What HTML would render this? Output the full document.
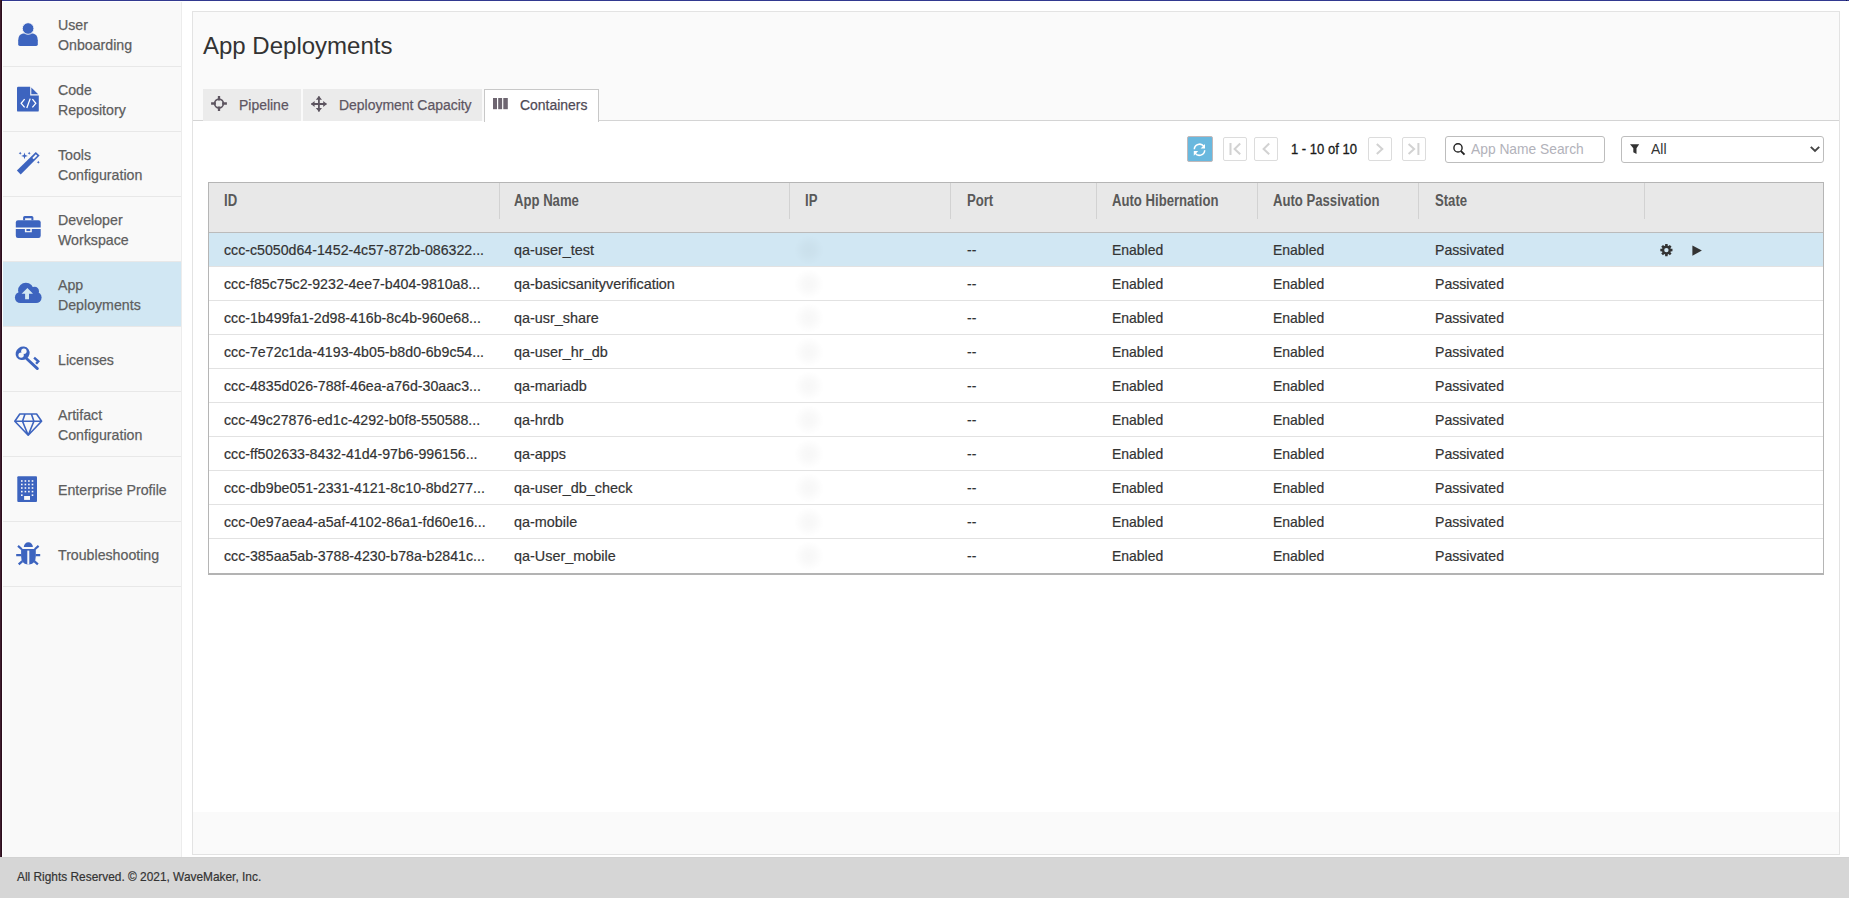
<!DOCTYPE html>
<html><head><meta charset="utf-8">
<style>
*{box-sizing:border-box;margin:0;padding:0}
html,body{width:1849px;height:898px;overflow:hidden;background:#fff;font-family:"Liberation Sans",sans-serif;color:#333}
.abs{position:absolute}
#topline{left:0;top:0;width:1849px;height:1px;background:#323990}
#ledge{left:0;top:0;width:2px;height:898px;background:linear-gradient(to right,#3f1d2e 0,#3f1d2e 1px,#2b0d1c 1px)}
#side{left:3px;top:2px;width:179px;height:855px;background:#f9f9f9;border-right:1px solid #ececec}
.item{position:absolute;left:0;width:178px;height:65px;border-bottom:1px solid #e8e8e8}
.item.active{background:#d1e7f3}
.item .lbl{position:absolute;left:55px;font-size:15px;line-height:20px;color:#5e5e5e;white-space:nowrap;transform:scaleX(0.945);transform-origin:0 0;-webkit-text-stroke:0.25px #5e5e5e}
.item svg{position:absolute}
#panel{left:192px;top:11px;width:1648px;height:844px;border:1px solid #e3e3e3;background:#fafafa}
#title{left:203px;top:32px;font-size:24px;line-height:28px;color:#333;white-space:nowrap}
#tabline{left:193px;top:120px;width:1646px;height:1px;background:#d4d4d4}
#content{left:193px;top:121px;width:1646px;height:691px;background:#fff}
.tab{position:absolute;top:89px;height:32px;background:#ebebeb;font-size:15.5px;color:#5e5662;white-space:nowrap}
.tab .t{position:absolute;top:8px;line-height:16px;transform:scaleX(0.9);transform-origin:0 0;-webkit-text-stroke:0.25px currentColor}
.tab svg{position:absolute}
.tab.act{background:#fff;border:1px solid #c8c8c8;border-bottom:none;color:#4f4a55}
.tab.act .t{top:7px}
#footer{left:0;top:857px;width:1849px;height:41px;background:#d6d6d6;border-top:1px solid #d2d2d2}
#footer span{position:absolute;left:17px;top:11px;font-size:13.3px;line-height:16px;color:#333;white-space:nowrap;transform:scaleX(0.894);transform-origin:0 0;-webkit-text-stroke:0.2px #333}
.pbtn{position:absolute;top:137px;width:24px;height:24px;border:1px solid #dcdcdc;border-radius:2px;background:#fff}
#refresh{left:1187px;top:136px;width:26px;height:26px;background:#69b8de;border:1px solid #c2b9ba;border-radius:2px}
#pinfo{left:1291px;top:141px;font-size:14px;line-height:16px;color:#1a1a1a;white-space:nowrap;transform:scaleX(0.93);transform-origin:0 0;-webkit-text-stroke:0.3px #1a1a1a}
#search{left:1445px;top:136px;width:160px;height:27px;border:1px solid #bdbdbd;border-radius:3px;background:#fff}
#search span{position:absolute;left:25px;top:4px;font-size:15px;line-height:16px;color:#b2b2ba;white-space:nowrap;transform:scaleX(0.92);transform-origin:0 0}
#filter{left:1621px;top:136px;width:203px;height:27px;border:1px solid #bdbdbd;border-radius:3px;background:#fff}
#filter span{position:absolute;left:29px;top:4px;font-size:15px;line-height:16px;color:#333;transform:scaleX(0.93);transform-origin:0 0}
#table{left:208px;top:182px;width:1616px;height:393px;border:1px solid #b5b5b5;border-bottom:2px solid #b3b3b3;background:#fff}
#thead{position:absolute;left:0;top:0;width:1614px;height:50px;background:#e8e8e8;border-bottom:1px solid #bbb}
.th{position:absolute;top:10px;font-size:16px;font-weight:bold;line-height:16px;color:#595959;white-space:nowrap;transform:scaleX(0.82);transform-origin:0 0}
.sep{position:absolute;top:0;width:1px;height:36px;background:#d2d2d2}
.row{position:absolute;left:0;width:1614px;height:34px;border-bottom:1px solid #e2e2e2}
.row.sel{background:#d1e7f3}
.row span{position:absolute;top:9px;font-size:15px;line-height:16px;color:#333;white-space:nowrap;transform:scaleX(0.93);transform-origin:0 0;-webkit-text-stroke:0.2px #333}
.blob{position:absolute;left:585px;top:2px;width:30px;height:30px;border-radius:50%;background:radial-gradient(circle closest-side,rgba(0,0,0,0.032) 0,rgba(0,0,0,0.022) 40%,rgba(0,0,0,0.006) 80%,rgba(0,0,0,0) 100%)}

</style></head><body>
<div id="topline" class="abs"></div>
<div id="ledge" class="abs"></div>
<div class="abs" style="left:1846px;top:0;width:1px;height:1px;background:#101448"></div>
<div id="side" class="abs">
<div class="item" style="top:0px"><div class="lbl" style="top:13px">User<br>Onboarding</div></div>
<div class="item" style="top:65px"><div class="lbl" style="top:13px">Code<br>Repository</div></div>
<div class="item" style="top:130px"><div class="lbl" style="top:13px">Tools<br>Configuration</div></div>
<div class="item" style="top:195px"><div class="lbl" style="top:13px">Developer<br>Workspace</div></div>
<div class="item active" style="top:260px"><div class="lbl" style="top:13px">App<br>Deployments</div></div>
<div class="item" style="top:325px"><div class="lbl" style="top:23px">Licenses</div></div>
<div class="item" style="top:390px"><div class="lbl" style="top:13px">Artifact<br>Configuration</div></div>
<div class="item" style="top:455px"><div class="lbl" style="top:23px">Enterprise Profile</div></div>
<div class="item" style="top:520px"><div class="lbl" style="top:23px">Troubleshooting</div></div>
</div>
<div id="panel" class="abs"></div>
<div id="content" class="abs"></div>
<div id="tabline" class="abs"></div>
<div id="title" class="abs">App Deployments</div>
<div class="tab" style="left:203px;width:98px"><div class="t" style="left:36px">Pipeline</div></div>
<div class="tab" style="left:303px;width:179px"><div class="t" style="left:36px">Deployment Capacity</div></div>
<div class="tab act" style="left:484px;width:115px;height:33px"><div class="t" style="left:35px">Containers</div></div>
<div class="abs" style="left:301px;top:120px;width:2px;height:1px;background:#fafafa"></div>
<div class="abs" style="left:482px;top:120px;width:2px;height:1px;background:#fafafa"></div>
<div id="refresh" class="abs"></div>
<div class="pbtn" style="left:1223px"></div>
<div class="pbtn" style="left:1254px"></div>
<div id="pinfo" class="abs">1 - 10 of 10</div>
<div class="pbtn" style="left:1368px"></div>
<div class="pbtn" style="left:1402px"></div>
<div id="search" class="abs"><span>App Name Search</span></div>
<div id="filter" class="abs"><span>All</span></div>
<div id="table" class="abs">
<div id="thead"><div class="th" style="left:15px">ID</div><div class="th" style="left:305px">App Name</div><div class="th" style="left:596px">IP</div><div class="th" style="left:758px">Port</div><div class="th" style="left:903px">Auto Hibernation</div><div class="th" style="left:1064px">Auto Passivation</div><div class="th" style="left:1226px">State</div><div class="sep" style="left:290px"></div><div class="sep" style="left:580px"></div><div class="sep" style="left:741px"></div><div class="sep" style="left:887px"></div><div class="sep" style="left:1048px"></div><div class="sep" style="left:1209px"></div><div class="sep" style="left:1435px"></div></div>
<div class="row sel" style="top:50px"><div class="blob"></div><span style="left:15px;transform:scaleX(0.945)">ccc-c5050d64-1452-4c57-872b-086322...</span><span style="left:305px;transform:scaleX(0.96)">qa-user_test</span><span style="left:758px;transform:scaleX(0.93)">--</span><span style="left:903px;transform:scaleX(0.93)">Enabled</span><span style="left:1064px;transform:scaleX(0.93)">Enabled</span><span style="left:1226px;transform:scaleX(0.94)">Passivated</span></div>
<div class="row" style="top:84px"><div class="blob"></div><span style="left:15px;transform:scaleX(0.945)">ccc-f85c75c2-9232-4ee7-b404-9810a8...</span><span style="left:305px;transform:scaleX(0.96)">qa-basicsanityverification</span><span style="left:758px;transform:scaleX(0.93)">--</span><span style="left:903px;transform:scaleX(0.93)">Enabled</span><span style="left:1064px;transform:scaleX(0.93)">Enabled</span><span style="left:1226px;transform:scaleX(0.94)">Passivated</span></div>
<div class="row" style="top:118px"><div class="blob"></div><span style="left:15px;transform:scaleX(0.945)">ccc-1b499fa1-2d98-416b-8c4b-960e68...</span><span style="left:305px;transform:scaleX(0.96)">qa-usr_share</span><span style="left:758px;transform:scaleX(0.93)">--</span><span style="left:903px;transform:scaleX(0.93)">Enabled</span><span style="left:1064px;transform:scaleX(0.93)">Enabled</span><span style="left:1226px;transform:scaleX(0.94)">Passivated</span></div>
<div class="row" style="top:152px"><div class="blob"></div><span style="left:15px;transform:scaleX(0.945)">ccc-7e72c1da-4193-4b05-b8d0-6b9c54...</span><span style="left:305px;transform:scaleX(0.96)">qa-user_hr_db</span><span style="left:758px;transform:scaleX(0.93)">--</span><span style="left:903px;transform:scaleX(0.93)">Enabled</span><span style="left:1064px;transform:scaleX(0.93)">Enabled</span><span style="left:1226px;transform:scaleX(0.94)">Passivated</span></div>
<div class="row" style="top:186px"><div class="blob"></div><span style="left:15px;transform:scaleX(0.945)">ccc-4835d026-788f-46ea-a76d-30aac3...</span><span style="left:305px;transform:scaleX(0.96)">qa-mariadb</span><span style="left:758px;transform:scaleX(0.93)">--</span><span style="left:903px;transform:scaleX(0.93)">Enabled</span><span style="left:1064px;transform:scaleX(0.93)">Enabled</span><span style="left:1226px;transform:scaleX(0.94)">Passivated</span></div>
<div class="row" style="top:220px"><div class="blob"></div><span style="left:15px;transform:scaleX(0.945)">ccc-49c27876-ed1c-4292-b0f8-550588...</span><span style="left:305px;transform:scaleX(0.96)">qa-hrdb</span><span style="left:758px;transform:scaleX(0.93)">--</span><span style="left:903px;transform:scaleX(0.93)">Enabled</span><span style="left:1064px;transform:scaleX(0.93)">Enabled</span><span style="left:1226px;transform:scaleX(0.94)">Passivated</span></div>
<div class="row" style="top:254px"><div class="blob"></div><span style="left:15px;transform:scaleX(0.945)">ccc-ff502633-8432-41d4-97b6-996156...</span><span style="left:305px;transform:scaleX(0.96)">qa-apps</span><span style="left:758px;transform:scaleX(0.93)">--</span><span style="left:903px;transform:scaleX(0.93)">Enabled</span><span style="left:1064px;transform:scaleX(0.93)">Enabled</span><span style="left:1226px;transform:scaleX(0.94)">Passivated</span></div>
<div class="row" style="top:288px"><div class="blob"></div><span style="left:15px;transform:scaleX(0.945)">ccc-db9be051-2331-4121-8c10-8bd277...</span><span style="left:305px;transform:scaleX(0.96)">qa-user_db_check</span><span style="left:758px;transform:scaleX(0.93)">--</span><span style="left:903px;transform:scaleX(0.93)">Enabled</span><span style="left:1064px;transform:scaleX(0.93)">Enabled</span><span style="left:1226px;transform:scaleX(0.94)">Passivated</span></div>
<div class="row" style="top:322px"><div class="blob"></div><span style="left:15px;transform:scaleX(0.945)">ccc-0e97aea4-a5af-4102-86a1-fd60e16...</span><span style="left:305px;transform:scaleX(0.96)">qa-mobile</span><span style="left:758px;transform:scaleX(0.93)">--</span><span style="left:903px;transform:scaleX(0.93)">Enabled</span><span style="left:1064px;transform:scaleX(0.93)">Enabled</span><span style="left:1226px;transform:scaleX(0.94)">Passivated</span></div>
<div class="row" style="top:356px;border-bottom:none"><div class="blob"></div><span style="left:15px;transform:scaleX(0.945)">ccc-385aa5ab-3788-4230-b78a-b2841c...</span><span style="left:305px;transform:scaleX(0.96)">qa-User_mobile</span><span style="left:758px;transform:scaleX(0.93)">--</span><span style="left:903px;transform:scaleX(0.93)">Enabled</span><span style="left:1064px;transform:scaleX(0.93)">Enabled</span><span style="left:1226px;transform:scaleX(0.94)">Passivated</span></div>
</div>
<div id="footer" class="abs"><span>All Rights Reserved. © 2021, WaveMaker, Inc.</span></div>
<svg class="abs" style="left:0;top:0;pointer-events:none" width="1849" height="898" viewBox="0 0 1849 898">
<g fill="#3d64bf">
<!-- user -->
<path d="M18.2,44.3V40.2Q18.2,33.2 25,33.2H31Q37.8,33.2 37.8,40.2V44.3Q37.8,45.9 36.2,45.9H19.8Q18.2,45.9 18.2,44.3Z"/>
<circle cx="28.1" cy="28.5" r="5.8" stroke="#f9f9f9" stroke-width="0.9"/>
<!-- code file -->
<path d="M17,88Q17,86.7 18.3,86.7H30.2V95.4H38.8V110.4Q38.8,111.6 37.6,111.6H18.2Q17,111.6 17,110.4Z"/>
<path d="M31.3,87.6L38.2,94.2H31.3Z"/>
<path d="M24.6,99.2L21.2,103.3L24.6,107.4M26.8,108L30.2,98.6M32.4,99.2L35.8,103.3L32.4,107.4" fill="none" stroke="#fff" stroke-width="1.3"/>
<!-- wand -->
<path d="M35.8,151.9L39.6,155.6L20.7,174.4L16.9,170.6Z"/>
<path d="M35.9,154.3L37.3,155.7L33.7,159.3L32.3,157.9Z" fill="#f9f9f9"/>
<path d="M24.5,152.6L25.3,155.1L27.8,155.9L25.3,156.7L24.5,159.2L23.7,156.7L21.2,155.9L23.7,155.1Z"/>
<path d="M20.2,151.7L20.7,152.7L21.7,153.2L20.7,153.7L20.2,154.7L19.7,153.7L18.7,153.2L19.7,152.7Z"/>
<path d="M29.2,151.7L29.7,152.7L30.7,153.2L29.7,153.7L29.2,154.7L28.7,153.7L27.7,153.2L28.7,152.7Z"/>
<path d="M38.3,160.7L38.8,161.7L39.8,162.2L38.8,162.7L38.3,163.7L37.8,162.7L36.8,162.2L37.8,161.7Z"/>
<!-- briefcase -->
<path d="M23.1,220.2V217.6Q23.1,216 24.7,216H31.8Q33.4,216 33.4,217.6V220.2H31.4V218.2H25.1V220.2Z"/>
<path d="M15.8,222.4Q15.8,220.2 18,220.2H38.5Q40.7,220.2 40.7,222.4V227.6H15.8Z"/>
<path d="M15.8,229H24.9V232.3H31.8V229H40.7V235.8Q40.7,238 38.5,238H18Q15.8,238 15.8,235.8Z"/>
<rect x="26.4" y="229" width="3.9" height="2.1"/>
<!-- cloud -->
<circle cx="20.4" cy="297.5" r="5.5"/>
<circle cx="36.1" cy="297.5" r="5.5"/>
<circle cx="25.9" cy="290.6" r="7.8"/>
<circle cx="34.6" cy="291.2" r="4.4"/>
<rect x="20.4" y="292" width="15.7" height="11"/>
<path d="M27.4,287.9L33,293.7H29V299.3H25.1V293.7H21.6Z" fill="#d1e7f3"/>
<!-- key -->
<ellipse cx="22.6" cy="353.3" rx="7.2" ry="6.6" transform="rotate(-35 22.6 353.3)"/>
<circle cx="23.9" cy="351.2" r="2.7" fill="#f9f9f9"/>
<circle cx="21.1" cy="355.1" r="2.7" fill="#f9f9f9"/>
<path d="M26.5,358.5L37.4,368.6" stroke="#3d64bf" stroke-width="2.8" stroke-linecap="round" fill="none"/>
<path d="M34.1,357.6L38.3,361.4L36.1,363.8" stroke="#3d64bf" stroke-width="2.4" fill="none"/>
<!-- diamond -->
<path d="M19.8,414H36.6L41.6,421.3L28.2,435.2L14.8,421.3Z M14.8,421.3H41.6 M25,414L22.5,421.3L28.2,435.2L33.9,421.3L31.4,414" fill="none" stroke="#3d64bf" stroke-width="1.6" stroke-linejoin="round"/>
<!-- building -->
<rect x="17.3" y="476.2" width="19.7" height="25.7" rx="1"/>
<g fill="#f9f9f9">
<rect x="21" y="480.2" width="1.6" height="1.6"/><rect x="24.6" y="480.2" width="1.6" height="1.6"/><rect x="28.1" y="480.2" width="1.6" height="1.6"/><rect x="31.7" y="480.2" width="1.6" height="1.6"/>
<rect x="21" y="483.7" width="1.6" height="1.6"/><rect x="24.6" y="483.7" width="1.6" height="1.6"/><rect x="28.1" y="483.7" width="1.6" height="1.6"/><rect x="31.7" y="483.7" width="1.6" height="1.6"/>
<rect x="21" y="487.2" width="1.6" height="1.6"/><rect x="24.6" y="487.2" width="1.6" height="1.6"/><rect x="28.1" y="487.2" width="1.6" height="1.6"/><rect x="31.7" y="487.2" width="1.6" height="1.6"/>
<rect x="21" y="490.8" width="1.6" height="1.6"/><rect x="24.6" y="490.8" width="1.6" height="1.6"/><rect x="28.1" y="490.8" width="1.6" height="1.6"/><rect x="31.7" y="490.8" width="1.6" height="1.6"/>
<rect x="21" y="494.4" width="1.6" height="1.6"/><rect x="31.7" y="494.4" width="1.6" height="1.6"/>
<rect x="24.1" y="496" width="5.9" height="3.9"/>
</g>
<!-- bug -->
<path d="M23.8,546.9A4.55,4.55 0 0 1 32.9,546.9Z"/>
<path d="M21.1,549H35.8V556Q35.8,564 29.3,564.4H27.6Q21.1,564 21.1,556Z"/>
<rect x="27.3" y="550.6" width="2" height="14" fill="#f9f9f9"/>
<path d="M18,545.9L21.8,549.3M38.6,545.9L34.8,549.3M16.2,555.1H21.3M35.6,555.1H40.2M18.7,564.4L22.4,561.1M37.9,564.4L34.2,561.1" stroke="#3d64bf" stroke-width="2.2" fill="none"/>
</g>

<!-- tab icons -->
<g fill="none" stroke="#5d5560">
<circle cx="219" cy="103.5" r="4.4" stroke-width="1.6"/>
<path d="M219,96V100.6M219,106.4V111M211.1,103.5H215.9M222.1,103.5H226.9" stroke-width="2.3"/>
<path d="M311.5,104H326.3M318.9,96.6V111.4" stroke-width="1.8"/>
</g>
<g fill="#5d5560">
<path d="M318.9,96L322,99.7H315.8Z M318.9,111.8L322,108.1H315.8Z M310.9,104L314.6,100.9V107.1Z M326.9,104L323.2,100.9V107.1Z"/>
</g>
<g fill="#6d6570">
<rect x="493" y="98" width="4" height="11.2"/><rect x="498.2" y="98" width="3.9" height="11.2"/><rect x="503.3" y="98" width="4.5" height="11.2"/>
</g>
<!-- refresh -->
<g fill="none" stroke="#fff" stroke-width="1.5">
<path d="M1194.3,149.3A5.3,5.3 0 0 1 1203.9,146.4"/>
<path d="M1204.7,150.3A5.3,5.3 0 0 1 1195.1,153.1"/>
</g>
<path d="M1205,143.9V148.6H1200.6Z M1193.8,155.8V151.1H1198.2Z" fill="#fff"/>
<!-- pager -->
<g fill="none" stroke="#d2d2d2" stroke-width="2">
<path d="M1240.2,143.6L1234.6,148.9L1240.2,154.3M1230.5,143V155"/>
<path d="M1269.2,143.6L1263.6,148.9L1269.2,154.3"/>
<path d="M1376.8,143.9L1382.3,148.9L1376.8,153.9"/>
<path d="M1408.6,143.9L1414.1,148.9L1408.6,153.9M1418.4,143V155"/>
</g>
<!-- search -->
<circle cx="1458" cy="147.9" r="4.1" fill="none" stroke="#222" stroke-width="1.4"/>
<path d="M1461,151.1L1464.5,154.6" stroke="#222" stroke-width="1.9"/>
<!-- filter -->
<path d="M1630,144.2H1639.2L1636.5,148.3V153.9L1633.3,152.2V148.3Z" fill="#333"/>
<!-- chevron -->
<path d="M1810.8,146.8L1815,151L1819.2,146.8" fill="none" stroke="#444" stroke-width="1.9"/>
<!-- gear, play -->
<path d="M1665.07,245.80 L1665.17,244.02 L1667.63,244.02 L1667.73,245.80 L1668.50,246.12 L1669.83,244.93 L1671.57,246.67 L1670.38,248.00 L1670.70,248.77 L1672.48,248.87 L1672.48,251.33 L1670.70,251.43 L1670.38,252.20 L1671.57,253.53 L1669.83,255.27 L1668.50,254.08 L1667.73,254.40 L1667.63,256.18 L1665.17,256.18 L1665.07,254.40 L1664.30,254.08 L1662.97,255.27 L1661.23,253.53 L1662.42,252.20 L1662.10,251.43 L1660.32,251.33 L1660.32,248.87 L1662.10,248.77 L1662.42,248.00 L1661.23,246.67 L1662.97,244.93 L1664.30,246.12Z M1668.60,250.10 A2.2,2.2 0 1 0 1664.20,250.10 A2.2,2.2 0 1 0 1668.60,250.10Z" fill="#333" fill-rule="evenodd"/>
<path d="M1692.4,245.6L1701.9,250.6L1692.4,255.7Z" fill="#333"/>
</svg>

</body></html>
